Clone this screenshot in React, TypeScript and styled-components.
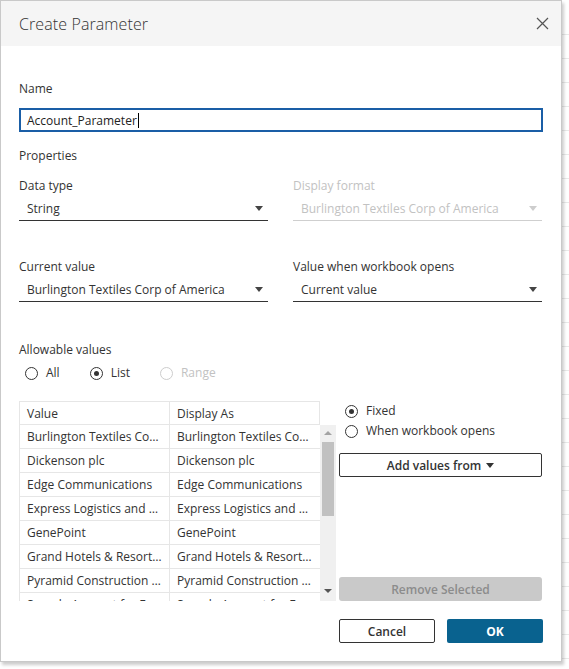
import React from "react";
import styled, { createGlobalStyle } from "styled-components";

const GlobalStyle = createGlobalStyle`
  html, body { margin: 0; padding: 0; background: #fff; }
  body {
    font-family: "Open Sans", "Liberation Sans", Arial, sans-serif;
    color: #333;
    -webkit-font-smoothing: antialiased;
  }
  * { box-sizing: border-box; }
`;

const Page = styled.div`
  width: 569px;
  height: 669px;
  overflow: hidden;
  background-color: #fff;
  background-image: repeating-linear-gradient(
    to bottom,
    transparent 0,
    transparent 23px,
    #e9e9e9 23px,
    #e9e9e9 24px
  );
  background-position: 0 11px;
`;

const Dialog = styled.div`
  width: 562px;
  height: 662px;
  border: 1px solid #c9c9c9;
  background: #fff;
  box-shadow: 2px 3px 3px rgba(0, 0, 0, 0.2);
  display: flex;
  flex-direction: column;
`;

const Header = styled.div`
  height: 45px;
  flex: none;
  background: #f5f5f5;
  display: flex;
  align-items: center;
  justify-content: space-between;
  padding: 0 12px 0 18px;
`;

const Title = styled.h1`
  margin: 0;
  font-size: 16px;
  font-weight: 300;
  color: #333;
  letter-spacing: 0.1px;
`;

const CloseButton = styled.button`
  border: 0;
  background: transparent;
  padding: 0;
  width: 14px;
  height: 14px;
  display: flex;
  align-items: center;
  justify-content: center;
  cursor: pointer;
`;

const Body = styled.div`
  flex: 1;
  padding: 35px 18px 0 18px;
  display: flex;
  flex-direction: column;
`;

const Label = styled.div<{ $disabled?: boolean; $mt?: number }>`
  font-size: 12px;
  line-height: 16px;
  height: 16px;
  color: ${(p) => (p.$disabled ? "#c2c2c2" : "#333")};
  margin-top: ${(p) => p.$mt ?? 0}px;
`;

const NameInput = styled.div`
  margin-top: 11px;
  height: 24px;
  border: 2px solid #1a5ea6;
  display: flex;
  align-items: center;
  padding-left: 6px;
  font-size: 12px;
  color: #222;
`;

const Caret = styled.span`
  display: inline-block;
  width: 1px;
  height: 15px;
  background: #000;
  margin-left: 1px;
`;

const FieldGrid = styled.div`
  display: grid;
  grid-template-columns: 249px 249px;
  column-gap: 25px;
`;

const Field = styled.div<{ $mt: number }>`
  display: flex;
  flex-direction: column;
  margin-top: ${(p) => p.$mt}px;
`;

const Select = styled.div<{ $disabled?: boolean }>`
  margin-top: 3px;
  height: 24px;
  border-bottom: 1px solid ${(p) => (p.$disabled ? "#cfcfcf" : "#333")};
  display: flex;
  align-items: center;
  justify-content: space-between;
  padding: 0 5px 0 8px;
  font-size: 12px;
  color: ${(p) => (p.$disabled ? "#c2c2c2" : "#333")};
`;

const Arrow = styled.span<{ $color?: string }>`
  width: 0;
  height: 0;
  border-left: 4px solid transparent;
  border-right: 4px solid transparent;
  border-top: 5px solid ${(p) => p.$color ?? "#444"};
`;

const RadioRow = styled.div`
  margin-top: 7px;
  height: 16px;
  display: flex;
  align-items: center;
  gap: 30px;
  padding-left: 6px;
`;

const RadioOption = styled.label<{ $disabled?: boolean }>`
  display: flex;
  align-items: center;
  gap: 8px;
  font-size: 12px;
  line-height: 16px;
  color: ${(p) => (p.$disabled ? "#c2c2c2" : "#333")};
`;

const RadioCircle = styled.span<{ $checked?: boolean; $disabled?: boolean }>`
  width: 13px;
  height: 13px;
  border-radius: 50%;
  border: 1px solid ${(p) => (p.$disabled ? "#cdcdcd" : "#333")};
  display: flex;
  align-items: center;
  justify-content: center;
  &::after {
    content: "";
    display: ${(p) => (p.$checked ? "block" : "none")};
    width: 5px;
    height: 5px;
    border-radius: 50%;
    background: #333;
  }
`;

const ListArea = styled.div`
  margin-top: 20px;
  height: 200px;
  display: flex;
  gap: 3px;
`;

const TableWrap = styled.div`
  width: 317px;
  display: flex;
  flex-direction: column;
`;

const HeaderRow = styled.div`
  width: 301px;
  height: 24px;
  display: flex;
  border: 1px solid #e6e6e6;
  flex: none;
`;

const TableBody = styled.div`
  display: flex;
  height: 176px;
`;

const Rows = styled.div`
  width: 301px;
  height: 176px;
  overflow: hidden;
  border-left: 1px solid #e6e6e6;
`;

const Row = styled.div`
  height: 24px;
  display: flex;
  border-bottom: 1px solid #e6e6e6;
`;

const Cell = styled.div<{ $first?: boolean }>`
  width: ${(p) => (p.$first ? 150 : 149)}px;
  flex: none;
  padding: 0 6px 0 7px;
  font-size: 12px;
  line-height: 23px;
  color: #333;
  white-space: nowrap;
  overflow: hidden;
  text-overflow: ellipsis;
  border-right: ${(p) => (p.$first ? "1px solid #e6e6e6" : "0")};
`;

const Scrollbar = styled.div`
  width: 16px;
  height: 176px;
  background: #f0f0f0;
  display: flex;
  flex-direction: column;
  align-items: center;
  padding-top: 6px;
`;

const ScrollArrowUp = styled.span`
  width: 0;
  height: 0;
  border-left: 4px solid transparent;
  border-right: 4px solid transparent;
  border-bottom: 4px solid #a3a3a3;
`;

const ScrollArrowDown = styled.span`
  width: 0;
  height: 0;
  border-left: 4px solid transparent;
  border-right: 4px solid transparent;
  border-top: 4px solid #555;
  margin-top: auto;
  margin-bottom: 8px;
`;

const Thumb = styled.div`
  width: 12px;
  height: 74px;
  background: #c1c1c1;
  margin-top: 7px;
`;

const RightCol = styled.div`
  width: 203px;
  display: flex;
  flex-direction: column;
  padding-top: 2px;
`;

const RightRadios = styled.div`
  display: flex;
  flex-direction: column;
  gap: 4px;
  padding-left: 6px;
`;

const OutlineButton = styled.button<{ $width?: number; $mt?: number }>`
  height: 24px;
  width: ${(p) => (p.$width ? `${p.$width}px` : "100%")};
  margin-top: ${(p) => p.$mt ?? 0}px;
  border: 1px solid #333;
  border-radius: 2px;
  background: #fff;
  color: #333;
  font-family: inherit;
  font-size: 12px;
  font-weight: 600;
  display: flex;
  align-items: center;
  justify-content: center;
  gap: 5px;
  padding: 0;
`;

const DisabledButton = styled.button`
  margin-top: auto;
  height: 24px;
  width: 100%;
  border: 0;
  border-radius: 3px;
  background: #c9c9c9;
  color: #8c8c8c;
  font-family: inherit;
  font-size: 12px;
  font-weight: 600;
  padding: 0;
`;

const Footer = styled.div`
  margin-top: 18px;
  display: flex;
  justify-content: flex-end;
  gap: 12px;
`;

const PrimaryButton = styled.button`
  height: 24px;
  width: 96px;
  border: 0;
  border-radius: 2px;
  background: #09628f;
  color: #fff;
  font-family: inherit;
  font-size: 12px;
  font-weight: 700;
  padding: 0;
`;

const values = [
  "Burlington Textiles Corp of America",
  "Dickenson plc",
  "Edge Communications",
  "Express Logistics and Transport",
  "GenePoint",
  "Grand Hotels & Resorts Ltd",
  "Pyramid Construction Inc.",
  "Sample Account for Entitlements",
];

export default function App() {
  return (
    <Page>
      <GlobalStyle />
      <Dialog>
        <Header>
          <Title>Create Parameter</Title>
          <CloseButton aria-label="Close">
            <svg width="13" height="13" viewBox="0 0 13 13">
              <path d="M1 1 L12 12 M12 1 L1 12" stroke="#555" strokeWidth="1.2" fill="none" />
            </svg>
          </CloseButton>
        </Header>
        <Body>
          <Label>Name</Label>
          <NameInput>
            Account_Parameter
            <Caret />
          </NameInput>
          <Label $mt={16}>Properties</Label>
          <FieldGrid>
            <Field $mt={14}>
              <Label>Data type</Label>
              <Select>
                String
                <Arrow />
              </Select>
            </Field>
            <Field $mt={14}>
              <Label $disabled>Display format</Label>
              <Select $disabled>
                Burlington Textiles Corp of America
                <Arrow $color="#cdcdcd" />
              </Select>
            </Field>
            <Field $mt={38}>
              <Label>Current value</Label>
              <Select>
                Burlington Textiles Corp of America
                <Arrow />
              </Select>
            </Field>
            <Field $mt={38}>
              <Label>Value when workbook opens</Label>
              <Select>
                Current value
                <Arrow />
              </Select>
            </Field>
          </FieldGrid>
          <Label $mt={40}>Allowable values</Label>
          <RadioRow>
            <RadioOption>
              <RadioCircle />
              All
            </RadioOption>
            <RadioOption>
              <RadioCircle $checked />
              List
            </RadioOption>
            <RadioOption $disabled>
              <RadioCircle $disabled />
              Range
            </RadioOption>
          </RadioRow>
          <ListArea>
            <TableWrap>
              <HeaderRow>
                <Cell $first>Value</Cell>
                <Cell>Display As</Cell>
              </HeaderRow>
              <TableBody>
                <Rows>
                  {values.map((v) => (
                    <Row key={v}>
                      <Cell $first>{v}</Cell>
                      <Cell>{v}</Cell>
                    </Row>
                  ))}
                </Rows>
                <Scrollbar>
                  <ScrollArrowUp />
                  <Thumb />
                  <ScrollArrowDown />
                </Scrollbar>
              </TableBody>
            </TableWrap>
            <RightCol>
              <RightRadios>
                <RadioOption>
                  <RadioCircle $checked />
                  Fixed
                </RadioOption>
                <RadioOption>
                  <RadioCircle />
                  When workbook opens
                </RadioOption>
              </RightRadios>
              <OutlineButton $mt={14}>
                Add values from
                <Arrow $color="#333" />
              </OutlineButton>
              <DisabledButton>Remove Selected</DisabledButton>
            </RightCol>
          </ListArea>
          <Footer>
            <OutlineButton $width={96}>Cancel</OutlineButton>
            <PrimaryButton>OK</PrimaryButton>
          </Footer>
        </Body>
      </Dialog>
    </Page>
  );
}
